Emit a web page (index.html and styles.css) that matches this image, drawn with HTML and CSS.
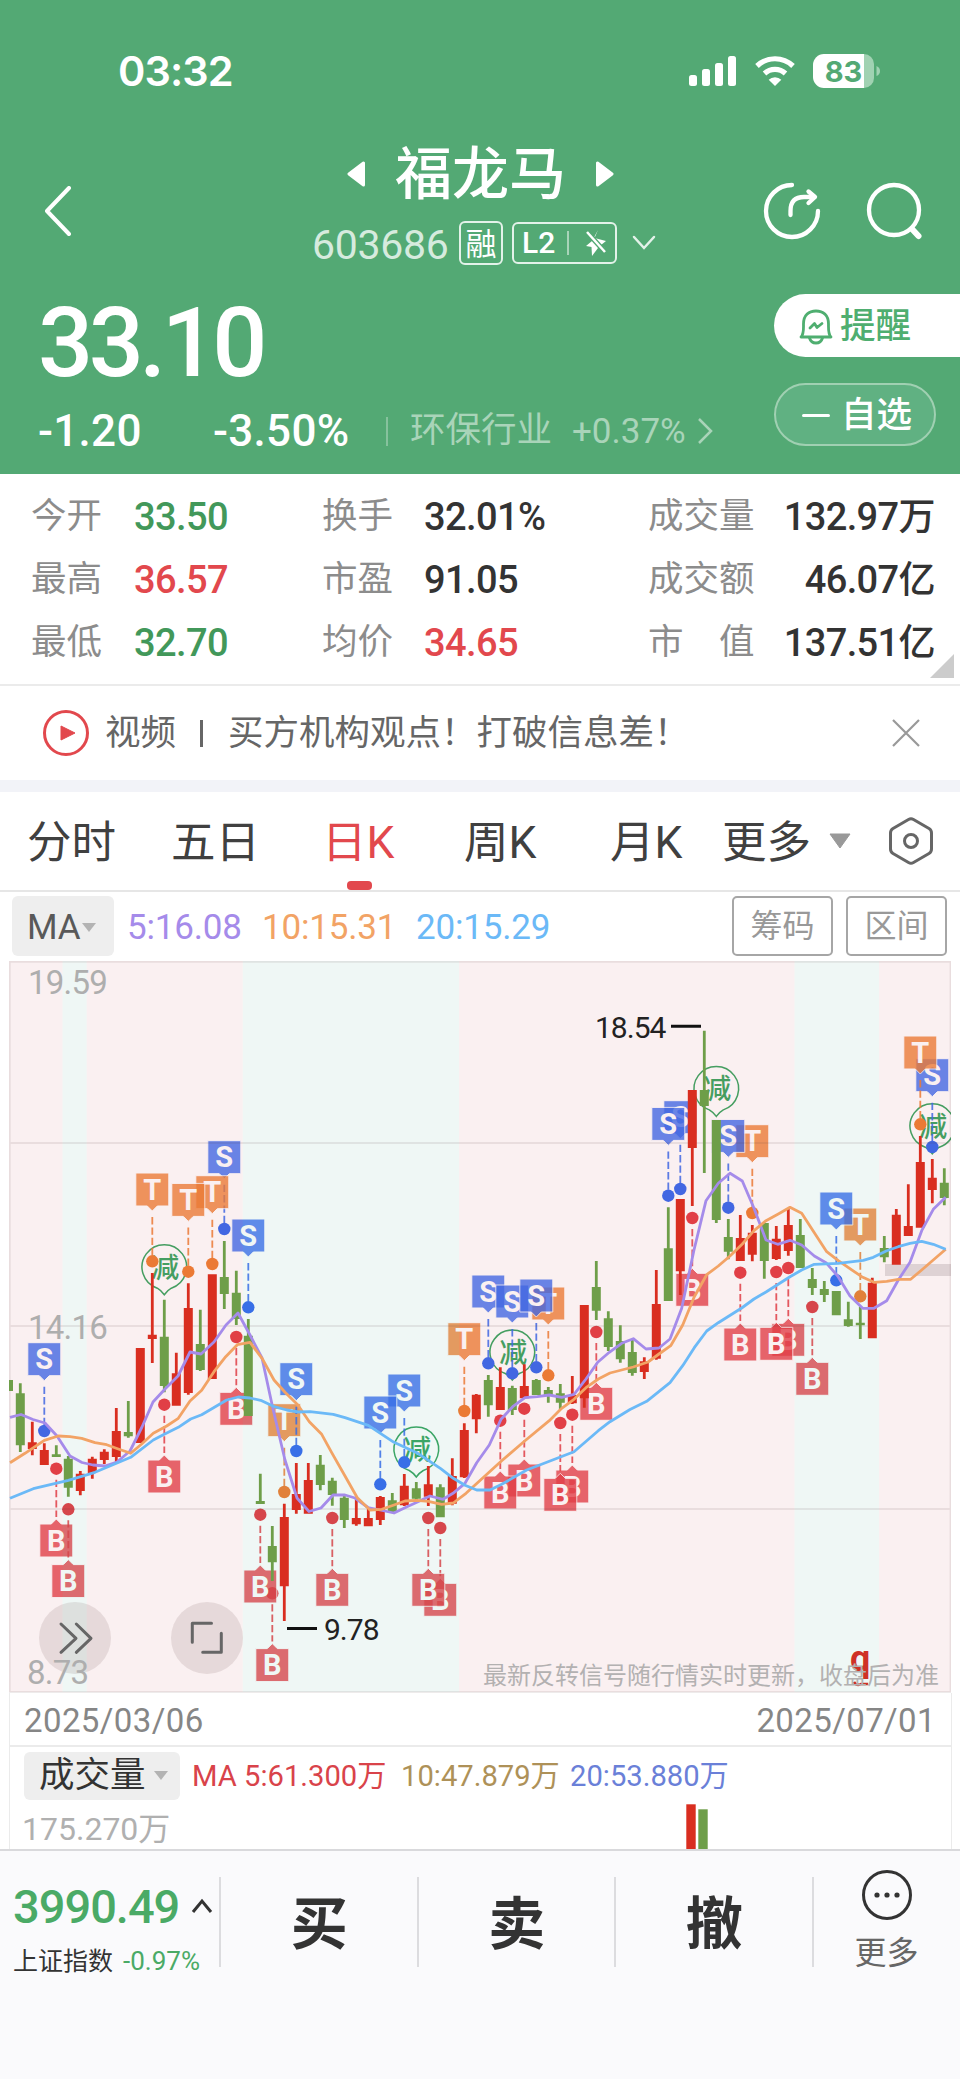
FILE: index.html
```html
<!DOCTYPE html>
<html lang="zh-CN">
<head>
  <meta charset="UTF-8" />
  <meta name="viewport" content="width=device-width, initial-scale=1" />
  <title>福龙马 603686</title>
  <link rel="stylesheet" href="styles.css">
</head>
<body>
  <header class="header">
    <div class="status">
      <span class="time">03:32</span>
      <svg class="status-icons" width="192" height="36" viewBox="0 0 192 36" aria-hidden="true">
        <g fill="#fff">
          <rect x="0" y="21" width="8" height="11" rx="2.5" />
          <rect x="13" y="15" width="8" height="17" rx="2.5" />
          <rect x="26" y="9" width="8" height="23" rx="2.5" />
          <rect x="39" y="2" width="8" height="30" rx="2.5" />
          <path d="M86 32 l-6.300 -6.300 a9 9 0 0 1 12.600 0 z" />
        </g>
        <g fill="none" stroke="#fff" stroke-width="5.200">
          <path d="M75.500 19.500 a15.500 15.500 0 0 1 21 0" />
          <path d="M68 12 a26 26 0 0 1 36 0" />
        </g>
        <path d="M134 0 h41 a10 10 0 0 1 10 10 v14 a10 10 0 0 1 -10 10 h-41 z" fill="#a0d2b2" />
        <path d="M135 0 h40 v34 h-40 a11 11 0 0 1 -11 -11 v-12 a11 11 0 0 1 11 -11 z" fill="#fff" />
        <path d="M187.500 12 q3.500 1.500 3.500 5 t-3.500 5 z" fill="#a0d2b2" />
        <text class="battery" x="154.500" y="27.500" text-anchor="middle">83</text>
      </svg>
    </div>

    <nav class="nav">
      <svg class="back" width="28" height="50" viewBox="0 0 28 50"><path d="M25 2 L3 25 L25 48" fill="none" stroke="#fff" stroke-width="4" stroke-linecap="round" stroke-linejoin="round" /></svg>
      <div class="stock">
        <div class="stock-name">
          <svg width="18" height="26" viewBox="0 0 18 26"><path d="M16.500 2 V24 L2 13 Z" fill="#fff" stroke="#fff" stroke-width="3" stroke-linejoin="round" /></svg>
          <h1>福龙马</h1>
          <svg width="18" height="26" viewBox="0 0 18 26"><path d="M1.500 2 V24 L16 13 Z" fill="#fff" stroke="#fff" stroke-width="3" stroke-linejoin="round" /></svg>
        </div>
        <div class="stock-code">
          <span class="code">603686</span>
          <span class="badge badge-rong">融</span>
          <span class="badge badge-l2">L2<i></i>
            <svg width="22" height="28" viewBox="0 0 22 28">
              <path d="M13 1 L9.500 9 L21 12 L16 16 L20 19.500 L13 19 L7 27 L6.500 18 L1 17 L7 12 Z" fill="#fff" />
              <path d="M2 3 L20 23" stroke="#53a974" stroke-width="5" />
              <path d="M2 3 L20 23" stroke="#fff" stroke-width="2.500" />
            </svg>
          </span>
          <svg class="code-more" width="24" height="16" viewBox="0 0 24 16"><path d="M2 2 L12 13 L22 2" fill="none" stroke="#e3f2e9" stroke-width="2.500" stroke-linecap="round" /></svg>
        </div>
      </div>
      <svg class="share" width="60" height="60" viewBox="0 0 60 60">
        <g fill="none" stroke="#fff" stroke-width="4.300" stroke-linecap="round" stroke-linejoin="round">
          <path d="M30 4 A26 26 0 1 0 56 30" />
          <path d="M28.500 34 V30 C28.500 20 34 16 42 16 H52" />
          <path d="M46.500 10.500 L53 16 L46.500 22" />
        </g>
      </svg>
      <svg class="search" width="60" height="60" viewBox="0 0 60 60">
        <circle cx="29" cy="29" r="25" fill="none" stroke="#fff" stroke-width="4.300" />
        <path d="M47 48 L53.500 55" stroke="#fff" stroke-width="6" stroke-linecap="round" />
      </svg>
    </nav>

    <section class="quote">
      <div class="quote-main">
        <div class="price">33.10</div>
        <div class="change">
          <span class="diff">-1.20</span>
          <span class="pct">-3.50%</span>
          <i></i>
          <span class="industry">环保行业</span>
          <span class="industry-pct">+0.37%</span>
          <svg width="16" height="28" viewBox="0 0 16 28"><path d="M2 2 L14 14 L2 26" fill="none" stroke="#a9d4b9" stroke-width="2.500" /></svg>
        </div>
      </div>
      <div class="quote-actions">
        <button class="remind">
          <svg width="34" height="36" viewBox="0 0 34 36">
            <g fill="none" stroke="#4fae70" stroke-width="2.800" stroke-linejoin="round" stroke-linecap="round">
              <path d="M2 28 C5 25 4.500 21 4.500 15 C4.500 6 10 2 17 2 S29.500 6 29.500 15 C29.500 21 29 25 32 28 Z" />
              <path d="M10.500 29 Q12 34 17 34 T23.500 29" />
              <path d="M11 19 L15.500 14.500 L18 18.500 L23 14.500" />
            </g>
          </svg>提醒
        </button>
        <button class="watch"><i></i>自选</button>
      </div>
    </section>
  </header>

  <section class="stats">
    <span class="label">今开</span><b class="down">33.50</b>
    <span class="label">换手</span><b>32.01%</b>
    <span class="label">成交量</span><b class="end">132.97<em>万</em></b>
    <span class="label">最高</span><b class="up">36.57</b>
    <span class="label">市盈</span><b>91.05</b>
    <span class="label">成交额</span><b class="end">46.07<em>亿</em></b>
    <span class="label">最低</span><b class="down">32.70</b>
    <span class="label">均价</span><b class="up">34.65</b>
    <span class="label">市　值</span><b class="end">137.51<em>亿</em></b>
  </section>

  <section class="promo">
    <svg width="48" height="48" viewBox="0 0 48 48">
      <circle cx="24" cy="24" r="21.500" fill="none" stroke="#e2484d" stroke-width="3" />
      <path d="M19 17 L33 24 L19 31 Z" fill="#e2484d" stroke="#e2484d" stroke-width="1" stroke-linejoin="round" />
    </svg>
    <span class="promo-tag">视频</span>
    <i></i>
    <span class="promo-text">买方机构观点！打破信息差！</span>
    <svg width="28" height="28" viewBox="0 0 28 28"><path d="M1 1 L27 27 M27 1 L1 27" stroke="#999" stroke-width="2.200" /></svg>
  </section>

  <nav class="tabs">
    <a>分时</a>
    <a>五日</a>
    <a class="active">日K</a>
    <a>周K</a>
    <a>月K</a>
    <a>更多</a>
    <svg width="24" height="16" viewBox="0 0 24 16"><path d="M2 1 H22 L12 15 Z" fill="#999" stroke="#999" stroke-linejoin="round" /></svg>
    <svg class="settings" width="46" height="50" viewBox="0 0 46 50">
      <g fill="none" stroke="#666" stroke-width="3" stroke-linejoin="round">
        <path d="M20.500 3.500 Q23 2 25.500 3.500 L41 12.500 Q43.500 14 43.500 17 V33 Q43.500 36 41 37.500 L25.500 46.500 Q23 48 20.500 46.500 L5 37.500 Q2.500 36 2.500 33 V17 Q2.500 14 5 12.500 Z" />
        <circle cx="23" cy="25" r="6.500" />
      </g>
    </svg>
  </nav>

  <section class="ma-bar">
    <span class="picker ma-picker">MA<i></i></span>
    <span class="ma5">5:16.08</span>
    <span class="ma10">10:15.31</span>
    <span class="ma20">20:15.29</span>
    <button class="ghost">筹码</button>
    <button class="ghost">区间</button>
  </section>

  <svg id="kline" class="kline" width="960" height="732" viewBox="0 961 960 732"></svg>

  <section class="panel dates">
    <span>2025/03/06</span>
    <span>2025/07/01</span>
  </section>

  <section class="panel volume">
    <div class="volume-bar">
      <span class="picker volume-picker">成交量<i></i></span>
      <span class="vol5">MA 5:61.300万</span>
      <span class="vol10">10:47.879万</span>
      <span class="vol20">20:53.880万</span>
    </div>
    <svg class="volume-chart" width="940" height="46" viewBox="10 1803 940 46">
      <text x="22" y="1839.500">175.270万</text>
      <rect x="686.300" y="1804.300" width="9.400" height="46" fill="#d92e20" />
      <rect x="698.300" y="1809.300" width="9.400" height="41" fill="#6e9e49" />
    </svg>
  </section>

  <footer class="trade">
    <div class="index">
      <div class="index-value">3990.49
        <svg width="22" height="16" viewBox="0 0 22 16"><path d="M2 14 L11 3 L20 14" fill="none" stroke="#333" stroke-width="3" /></svg>
      </div>
      <div class="index-name">上证指数<span>-0.97%</span></div>
    </div>
    <button>买</button>
    <button>卖</button>
    <button>撤</button>
    <div class="more">
      <svg width="52" height="52" viewBox="0 0 52 52">
        <circle cx="26" cy="26" r="23.500" fill="none" stroke="#333" stroke-width="3" />
        <g fill="#333"><circle cx="16" cy="26" r="2.600" /><circle cx="26" cy="26" r="2.600" /><circle cx="36" cy="26" r="2.600" /></g>
      </svg>
      <span>更多</span>
    </div>
  </footer>

  <script>
    // candles: high, body top, body bottom, low, r = up / g = down
    const candles = [
      [1383.3,1393.3,1445.3,1452,'g'],[1421.7,1442.3,1449,1455.3,'r'],[1443.3,1450,1465,1465,'r'],[1445.3,1454.3,1457,1457,'g'],
      [1456,1458.7,1487.7,1496.7,'g'],[1471,1473.7,1491,1495.3,'r'],[1456.7,1458.7,1473,1478.7,'r'],[1449.3,1451.7,1460,1464,'r'],
      [1408,1431,1457,1464,'r'],[1401,1432,1436.3,1437.7,'g'],[1348,1348,1443,1443,'r'],[1273,1334.7,1339,1363,'r'],
      [1299.7,1336.7,1386,1392.3,'g'],[1352.7,1373.3,1405.7,1405.7,'r'],[1283.3,1308,1393,1394.7,'r'],[1309.7,1344,1370,1371,'g'],
      [1274.3,1274.3,1379,1379,'r'],[1241,1277,1294,1309,'g'],[1270.7,1292.7,1319,1325,'g'],[1319,1335.7,1416,1416,'g'],
      [1473.7,1501,1504,1504,'g'],[1526,1546,1562.3,1581,'g'],[1503.7,1517,1586.3,1621,'r'],[1463,1494,1510,1513.7,'r'],
      [1463,1480,1513.7,1513.7,'r'],[1455,1464.7,1485,1490.3,'g'],[1477.7,1480.7,1495,1505.7,'g'],[1496,1497.7,1520,1528,'g'],
      [1498.3,1518,1524.3,1525.7,'r'],[1509,1518,1526.3,1526.3,'r'],[1496,1497,1520,1525,'r'],[1493,1500.3,1511.7,1512.7,'g'],
      [1474,1485.7,1505.3,1506,'r'],[1482,1488.3,1498.7,1500.7,'g'],[1466,1484.3,1496.7,1506,'r'],[1484.3,1487.3,1517.3,1517.3,'g'],
      [1458.3,1476,1503.7,1505.3,'r'],[1423.3,1430,1477.3,1478,'r'],[1394,1394.7,1419.3,1433.3,'r'],[1375,1380,1405.3,1416.7,'g'],
      [1367.3,1387,1410,1410,'r'],[1385.7,1388,1410,1415,'g'],[1364.3,1386,1398.3,1398.3,'r'],[1379,1380,1395,1395,'g'],
      [1387,1390,1395,1402.7,'g'],[1384,1393.3,1402.7,1409.3,'g'],[1376,1395,1403.3,1404,'r'],[1305,1305,1398.3,1407.7,'r'],
      [1261,1287,1310.7,1320,'g'],[1311.3,1318.3,1347,1351,'g'],[1325.3,1341,1359.3,1362.7,'g'],[1340,1352,1373,1375.7,'g'],
      [1357.3,1361.3,1372,1379,'r'],[1270,1304,1358.7,1359.7,'r'],[1207.3,1248.3,1301,1301,'g'],[1199,1199,1271.3,1295,'r'],
      [1090,1090,1148,1206,'r'],[1030.7,1090,1106,1173,'g'],[1120,1120,1220,1223,'g'],[1219,1237,1251.7,1259.3,'g'],
      [1215,1238,1261,1261,'r'],[1225,1232.7,1254.7,1261.3,'r'],[1223,1223,1261,1278.7,'g'],[1226,1238.7,1259,1260,'r'],
      [1209,1225,1251,1255.7,'r'],[1219,1235,1268,1268,'g'],[1268,1279,1288,1295,'g'],[1281,1289,1295,1302,'g'],
      [1291,1291,1315.3,1315.3,'g'],[1301.7,1319.3,1326,1326.7,'g'],[1306.7,1322.7,1325.3,1339,'g'],[1277.7,1282.7,1338.3,1338.3,'r'],
      [1236,1248,1257.3,1262.3,'g'],[1209,1214.7,1264.7,1264.7,'r'],[1184.3,1226,1236,1236,'r'],[1136,1162,1227.7,1227.7,'r'],
      [1159,1177.7,1190,1203.3,'r'],[1168.3,1182.7,1198,1205.3,'g']
    ];

    // signals: type, candle index, y of the dot (later ones are drawn on top)
    const signals = [
      ['B',66,1307],['B',64,1268],['B',63,1272],['B',60,1272.7],['B',56,1218],['B',48,1332],['B',46,1414.7],['B',45,1423],
      ['B',42,1408.7],['B',40,1420.7],['B',35,1528],['B',34,1518],['B',26,1518],['B',21,1593.3],['B',20,1514.7],['B',18,1337],
      ['B',12,1404.7],['B',3,1468.7],['B',4,1509.3],
      ['S',76,1147],['T',75,1124.3],['T',70,1296.3],['S',68,1280.3],['T',61,1213],['S',59,1207.7],['S',55,1189],['S',54,1195.7],
      ['T',44,1375.3],['S',39,1363.3],['S',41,1373.3],['S',43,1367.3],['T',37,1411],['S',32,1462.3],['S',30,1484.3],
      ['T',22,1492],['S',23,1451],['S',19,1307.3],['S',17,1229],['T',16,1264],['T',14,1271.7],['T',11,1261.3],['S',2,1431]
    ];
    const reduces = [[164.3,1267],[416.3,1449.3],[512.3,1352.3],[716.3,1088.7],[932.3,1126]];

    const ma5 = '10,1417.3 21,1414.5 33,1419.5 45,1423 57,1436 70,1456 82,1462.5 93,1465 105,1466 117,1462 130,1451 142,1427 153,1402 165,1389 178,1376 190,1352 201,1354 214,1342 226,1325 238,1313 250,1335 262,1358 273,1409 285,1460 297,1498 309,1511.5 321,1508 333,1495 345,1495 355,1498 368,1507.5 380,1510 394,1513 407,1506.7 418,1501.7 430,1496 443,1499.3 453,1493.3 465,1483.3 476.7,1462.7 489.3,1445 501,1419.3 512.7,1406.7 525,1397.7 537.3,1396.7 549.3,1395 561.7,1397.3 574,1394.3 586,1379 597.7,1362.3 609.3,1352.3 621.7,1343.3 633.3,1338.7 646,1349 659,1348 670,1339 681.7,1308.3 694,1250 706,1200.7 718.3,1183.3 730,1173.3 742.3,1181 754,1208.3 766,1240 777.7,1244.3 790,1240.3 801.7,1245 814.3,1256 826,1262.7 837.7,1276 850,1296 862.7,1308.3 874,1308.3 886.7,1300.7 898.3,1280 910,1262.3 921.7,1230.7 933.3,1209.3 945.7,1197.3';
    const ma10 = '10,1462.7 25,1453.3 44.3,1440.3 58.3,1436 70,1436.7 81.7,1438.3 95,1442.7 106.7,1444.7 118.3,1449 130.7,1453.3 141.7,1444 153.3,1433.3 166.7,1426 178.3,1418.3 190,1401 201.7,1390.3 214,1371.7 225.7,1356.7 237.3,1344.7 250,1342.3 262,1358.3 274,1380 285,1392.3 297.7,1404.7 309.3,1421.7 321.7,1434.3 331.7,1452.7 345,1476 357.3,1497.7 370,1510 381.7,1509.3 393.3,1505.3 405,1501 416.7,1500.3 428.3,1501.3 441.7,1504.3 453.3,1503 466,1493.3 501.7,1460.7 525,1440.7 549.3,1420.7 561.7,1408.3 574,1399.3 586,1387.7 598.3,1379 610,1373 633.3,1367 648,1362 659,1354 670.7,1345.7 682.7,1325 694.3,1296.7 706.7,1274.7 718.3,1266 730,1256 742.3,1244 754,1230.7 766,1220.7 778.3,1214 790,1207.3 801.7,1213.3 814,1232.3 826.7,1251.7 838.3,1260.7 861.7,1276.7 874,1282.3 886.7,1281.3 898.3,1279.3 910.7,1279.3 921.7,1270 945.7,1249.3';
    const ma20 = '10,1498.3 33.3,1488.7 68.3,1480.3 95,1472.3 130.7,1457.3 153.3,1440 163.3,1434.7 178.3,1427.3 190.7,1419 201.7,1414.7 226.7,1400 238.3,1397 250,1398 261.7,1400.7 273.3,1406.3 286.7,1410 298.3,1412 310,1411.7 333.3,1414.3 345,1417.7 368.3,1425.3 394,1442.3 416.7,1452.7 440.7,1468.7 453.3,1478.3 465,1485.3 476.7,1490 490,1490 501.7,1484.3 526.7,1470 574,1451.7 598.3,1430.7 610,1421.7 630,1409.5 646.7,1401.3 670,1382.7 682.7,1365.7 694.3,1347.7 706.7,1331 718.3,1322.7 741.7,1308 754,1299 766,1292 790,1276.7 801.7,1270 814.3,1264.3 838.3,1263.3 863.3,1260.3 873.3,1257.3 886.7,1250.7 898.3,1246.7 910,1243.3 921.7,1241.3 933.3,1244.3 945.7,1249.3';

    const candleX = i => 20.3 + 12 * i;
    const colors = { r: '#d92e20', g: '#6e9e49', S: '#3c6ef0', T: '#f08238', B: '#e5434a' };
    let svg = '<defs><clipPath id="plot"><rect x="9" y="961" width="942" height="732"/></clipPath></defs><g clip-path="url(#plot)">';

    for (const [x, y] of reduces) {
      svg += `<path class="reduce" d="M${x - 7} ${y + 21.2} A22.3 22.3 0 1 1 ${x + 7} ${y + 21.2} Q${x + 3} ${y + 23.5} ${x} ${y + 27.7} Q${x - 3} ${y + 23.5} ${x - 7} ${y + 21.2} Z"/>`;
      svg += `<text class="reduce-text" x="${x + 1}" y="${y + 10.5}">减</text>`;
    }

    for (const [type, i, y] of signals) {
      const x = candleX(i), c = colors[type];
      const below = type === 'B';
      const top = below ? y + 55.3 : y - 88.3;
      const shape = below
        ? `M${x - 16.5} ${top} H${x - 5} L${x} ${top - 5} L${x + 5} ${top} H${x + 16.5} V${top + 33} H${x - 16.5} Z`
        : `M${x - 16.5} ${top} H${x + 16.5} V${top + 33} H${x + 5} L${x} ${top + 38} L${x - 5} ${top + 33} H${x - 16.5} Z`;
      svg += below
        ? `<path class="dash" stroke="${c}" d="M${x} ${y + 11} V${top - 7}"/>`
        : `<path class="dash" stroke="${c}" d="M${x} ${y - 6} V${top + 42}"/>`;
      svg += `<circle cx="${x}" cy="${y}" r="6.2" fill="${c}"/>`;
      svg += `<path class="tag" fill="${c}" d="${shape}"/><text class="tag-text" x="${x}" y="${top + 26.5}">${type}</text>`;
    }

    // signal zones
    const zones = [[9,62.5,0],[62.5,86.7,1],[86.7,242.7,0],[242.7,459,1],[459,794.5,0],[794.5,879,1],[879,951,0]];
    for (const [a, b, green] of zones) {
      svg += `<rect class="${green ? 'zone-green' : 'zone-red'}" x="${a}" y="961" width="${b - a}" height="731"/>`;
    }
    svg += '<rect x="885" y="1264" width="66" height="12" fill="#ded2d4"/>';
    svg += '<path class="grid" d="M9 961.8 H951 M9 1143 H951 M9 1326 H951 M9 1509 H951 M9 1692 H951 M9.7 961 V1693 M950.6 961 V1693"/>';

    svg += '<rect x="9" y="1380" width="4" height="11" fill="#6e9e49"/>';
    candles.forEach(([high, open, close, low, c], i) => {
      const x = candleX(i);
      svg += `<path fill="${colors[c]}" d="M${x - 1.4} ${high} h2.8 V${low} h-2.8 Z M${x - 4.5} ${open} h9 V${close} h-9 Z"/>`;
    });

    svg += `<polyline class="line" stroke="#a58bea" points="${ma5}"/>`;
    svg += `<polyline class="line" stroke="#f2a365" points="${ma10}"/>`;
    svg += `<polyline class="line" stroke="#6bb9f7" points="${ma20}"/>`;

    svg += '<path class="peak" d="M671 1026.3 H701 M287 1628.5 H317"/>';
    svg += '<text class="peak-text" x="595" y="1037.700">18.54</text><text class="peak-text" x="324" y="1639.500">9.78</text>';
    svg += '<circle class="tool" cx="75" cy="1638" r="36"/><circle class="tool" cx="207" cy="1638" r="36"/>';
    svg += '<path class="tool-icon" d="M61 1624 L76 1638.3 L61 1652.3 M76.3 1624 L91 1638.3 L76.3 1652.3 M211.5 1623.3 H192.3 V1642.3 M221.3 1633.3 V1652.3 H202.7"/>';
    svg += '<text class="axis" x="28" y="994">19.59</text><text class="axis" x="28" y="1339">14.16</text><text class="axis" x="27" y="1683.700">8.73</text>';
    svg += '<text class="mark-q" x="850" y="1670.500">q</text><path d="M854 1682 Q857 1686.500 861 1684 H868" fill="none" stroke="#cf3126" stroke-width="2.500"/>';
    svg += '<text class="note" x="483" y="1684.200">最新反转信号随行情实时更新，收盘后为准</text></g>';

    document.getElementById('kline').innerHTML = svg;
  </script>
</body>
</html>
```
FILE: styles.css
```css
* {
  box-sizing: border-box;
}

body {
  margin: 0;
  width: 960px;
  background: #fff;
  color: #333;
  font-family: Roboto, "Noto Sans CJK SC", sans-serif;
  font-size: 36px;
  line-height: 1;
}

svg {
  display: block;
  flex: none;
}

i, em {
  font-style: normal;
}

button {
  margin: 0;
  padding: 0;
  border: 0;
  background: none;
  font-family: inherit;
  line-height: 1;
  color: inherit;
}

/* header */
.header {
  height: 474px;
  background: #53a974;
  color: #fff;
}

.status {
  display: flex;
  align-items: center;
  justify-content: space-between;
  height: 142px;
  padding: 2px 79px 0 118px;
}

.time {
  font-family: Inter, sans-serif;
  font-weight: 600;
  font-size: 41.500px;
  letter-spacing: -0.9px;
}

.battery {
  font-family: Inter, sans-serif;
  font-weight: 700;
  font-size: 29px;
  fill: #53a974;
}

.nav {
  display: flex;
  align-items: center;
  height: 138px;
  padding-left: 44px;
}

.stock {
  width: 390px;
  margin-left: 240px;
}

.stock-name {
  display: flex;
  align-items: center;
  height: 64px;
  padding-left: 35px;
}

.stock-name h1 {
  margin: 0 30px;
  width: 171px;
  font-size: 57px;
  font-weight: 500;
}

.stock-code {
  display: flex;
  align-items: center;
  height: 74px;
}

.code {
  width: 147px;
  padding-top: 4px;
  font-size: 41px;
  letter-spacing: -0.3px;
  color: #d6ebde;
}

.badge {
  display: flex;
  align-items: center;
  border: 2px solid #e3f2e9;
  border-radius: 6px;
}

.badge-rong {
  justify-content: center;
  width: 44px;
  height: 44px;
  padding-top: 2px;
  font-size: 31px;
}

.badge-l2 {
  width: 105px;
  height: 42px;
  margin-left: 9px;
  padding-left: 8px;
  font-size: 30px;
  font-weight: 500;
}

.badge-l2 i {
  width: 2px;
  height: 24px;
  margin: 0 16px 0 12px;
  background: #a9d4b9;
}

.code-more {
  margin-left: 15px;
}

.share {
  margin-left: 60px;
}

.search {
  margin-left: 43px;
}

.quote {
  display: flex;
  justify-content: space-between;
}

.quote-main {
  padding: 13px 0 0 38px;
}

.price {
  height: 99px;
  line-height: 100px;
  font-size: 97px;
  font-weight: 500;
  letter-spacing: -4.500px;
}

.change {
  display: flex;
  align-items: center;
  height: 78px;
  font-size: 44px;
  font-weight: 500;
}

.diff {
  width: 175px;
  letter-spacing: 0.3px;
}

.pct {
  width: 173px;
  letter-spacing: 0.3px;
}

.change i {
  width: 2px;
  height: 29px;
  margin-right: 22px;
  background: #86c29d;
}

.industry {
  width: 162px;
  font-size: 35.500px;
  font-weight: 400;
  color: #a9d4b9;
}

.industry-pct {
  width: 125px;
  font-size: 35px;
  font-weight: 400;
  color: #a9d4b9;
}

.quote-actions {
  width: 186px;
  padding-top: 14px;
}

.quote-actions button {
  display: flex;
  align-items: center;
  height: 63px;
  padding-top: 2px;
  font-size: 35.500px;
  font-weight: 500;
}

.remind {
  width: 186px;
  padding-left: 25px;
  gap: 7px;
  border-radius: 32px 0 0 32px;
  background: #fff;
  color: #4fae70;
}

.watch {
  width: 162px;
  margin-top: 26px;
  padding-left: 26px;
  gap: 11px;
  border-radius: 32px;
  background: #60b182;
}

.quote-actions .watch {
  border: 2px solid #a0d0b2;
}

.watch i {
  width: 28px;
  height: 3px;
  border-radius: 2px;
  background: #fff;
}

/* stats */
.stats {
  position: relative;
  display: grid;
  grid-template-columns: 103px 188px 102px 224px 118px 169px;
  grid-auto-rows: 63px;
  align-items: center;
  height: 212px;
  padding: 11px 25px 0 31px;
  border-bottom: 2px solid #ebebeb;
}

.stats::after {
  content: "";
  position: absolute;
  right: 6px;
  bottom: 6px;
  border: 12px solid transparent;
  border-right-color: #ccc;
  border-bottom-color: #ccc;
}

.label {
  font-size: 35.500px;
  color: #8c8c8c;
}

.stats b {
  font-size: 38px;
  font-weight: 500;
  letter-spacing: -0.600px;
}

.stats em {
  font-size: 37px;
}

.stats .up {
  color: #e2484d;
}

.stats .down {
  color: #42985a;
}

.stats .end {
  text-align: right;
}

/* promo */
.promo {
  display: flex;
  align-items: center;
  height: 106px;
  padding: 0 40px 0 42px;
  border-bottom: 12px solid #f2f3f8;
  font-size: 35.500px;
  color: #666;
}

.promo-tag {
  margin-left: 15px;
  padding-top: 2px;
}

.promo i {
  width: 3px;
  height: 27px;
  margin: 0 25px 0 24px;
  background: #666;
}

.promo-text {
  flex: 1;
  padding-top: 2px;
}

/* tabs */
.tabs {
  display: grid;
  grid-template-columns: 144px 151px 142px 146px 112px 106px 60px 46px;
  align-items: center;
  height: 100px;
  padding-left: 27px;
  border-bottom: 2px solid #e6e6e6;
  font-size: 44.500px;
  color: #404040;
}

.tabs a {
  position: relative;
  padding-top: 4px;
}

.tabs .active {
  color: #e2484d;
}

.tabs .active::after {
  content: "";
  position: absolute;
  left: 25px;
  bottom: -25px;
  width: 25px;
  height: 9px;
  border-radius: 4px;
  background: #e2484d;
}

/* moving averages */
.ma-bar {
  display: flex;
  align-items: center;
  height: 69px;
  padding: 0 13px 1px 12px;
  font-size: 35px;
  letter-spacing: -0.200px;
}

.ma-bar > span {
  padding-top: 2px;
}

.picker {
  display: flex;
  align-items: center;
  border-radius: 6px;
  background: #eee;
}

.picker i {
  border: 7px solid transparent;
  border-top: 9px solid #b3b3b3;
  border-bottom: 0;
}

.ma-picker {
  width: 102px;
  height: 60px;
  padding-left: 15px;
  color: #595959;
}

.ma-picker i {
  margin-left: 2px;
}

.ma5 {
  width: 135px;
  margin-left: 13px;
  color: #a58bea;
}

.ma10 {
  width: 154px;
  color: #f2a365;
}

.ma20 {
  flex: 1;
  color: #6bb9f7;
}

.ghost {
  width: 101px;
  height: 60px;
  margin-left: 13px;
  border: 2px solid #a6a6a6;
  border-radius: 5px;
  font-size: 32px;
  color: #999;
}

/* k line */
.kline text {
  font-family: Roboto, "Noto Sans CJK SC", sans-serif;
}

.zone-red {
  fill: rgba(175, 0, 20, 0.058);
}

.zone-green {
  fill: rgba(0, 130, 90, 0.063);
}

.grid {
  fill: none;
  stroke: rgba(90, 60, 60, 0.1);
  stroke-width: 2;
}

.dash {
  stroke-width: 1.800;
  stroke-dasharray: 7.300 3;
  opacity: 0.85;
}

.tag {
  opacity: 0.79;
  stroke: #fff;
  stroke-width: 1;
}

.kline .tag-text {
  font-size: 29px;
  font-weight: 700;
  text-anchor: middle;
  fill: #fff;
}

.reduce {
  fill: none;
  stroke: #3fa866;
  stroke-width: 1.500;
}

.kline .reduce-text {
  font-size: 28px;
  font-weight: 500;
  text-anchor: middle;
  fill: #3fa866;
}

.line {
  fill: none;
  stroke-width: 2.800;
  stroke-linejoin: round;
}

.peak {
  stroke: #111;
  stroke-width: 3;
}

.peak-text {
  font-size: 30px;
  letter-spacing: -1px;
  fill: #222;
}

.tool {
  fill: rgba(90, 60, 60, 0.12);
}

.tool-icon {
  fill: none;
  stroke: #666;
  stroke-width: 3;
  stroke-linecap: round;
  stroke-linejoin: round;
}

.axis {
  font-size: 33px;
  letter-spacing: -0.800px;
  fill: #aeaeae;
}

.mark-q {
  font-size: 36px;
  font-weight: 700;
  fill: #cf3126;
}

.note {
  font-size: 24px;
  fill: #b3b1b1;
}

/* dates and volume */
.panel {
  width: 943px;
  margin-left: 9px;
  border: 1px solid #ebebeb;
  border-width: 0 1px;
}

.dates {
  display: flex;
  align-items: center;
  justify-content: space-between;
  height: 54px;
  padding: 2px 15px 0 14px;
  border-bottom: 2px solid #ebebeb;
  font-size: 33px;
  letter-spacing: 0.400px;
  color: #868686;
}

.volume {
  height: 102px;
}

.volume-bar {
  display: flex;
  align-items: center;
  height: 56px;
  padding-left: 14px;
  font-size: 29.200px;
}

.volume-bar > span {
  padding-top: 3px;
}

.volume-bar .volume-picker {
  width: 156px;
  height: 48px;
  padding: 0 0 0 15px;
  font-size: 35.500px;
  margin-top: 1px;
}

.volume-picker i {
  margin-left: 8px;
}

.vol5 {
  width: 209px;
  margin-left: 12px;
  color: #d9434a;
}

.vol10 {
  width: 169px;
  color: #ae9158;
}

.vol20 {
  color: #6a80d8;
}

.volume-chart text {
  font-size: 32px;
  fill: #b0b0b0;
}

/* bottom bar */
.trade {
  display: flex;
  height: 230px;
  border-top: 2px solid #d9d9dc;
  background: #fafafc;
}

.index {
  width: 219px;
  padding: 27px 0 0 13px;
}

.index-value {
  display: flex;
  align-items: center;
  gap: 12px;
  height: 56px;
  font-size: 47px;
  font-weight: 500;
  letter-spacing: -1px;
  color: #4aaa66;
}

.index-name {
  display: flex;
  align-items: center;
  height: 54px;
  font-size: 25px;
}

.index-name span {
  margin-left: 10px;
  font-size: 26px;
  color: #4aaa66;
}

.trade button,
.more {
  width: 197.500px;
  height: 90px;
  margin-top: 26px;
  border-left: 2px solid #dcdcdf;
}

.trade button {
  padding: 4px 0 0 1px;
  font-size: 57px;
  font-weight: 700;
}

.more {
  display: flex;
  flex-direction: column;
  align-items: center;
  width: 148px;
  font-size: 32px;
  color: #666;
}

.more svg {
  margin-top: -8px;
}

.more span {
  margin-top: 16px;
}
```
